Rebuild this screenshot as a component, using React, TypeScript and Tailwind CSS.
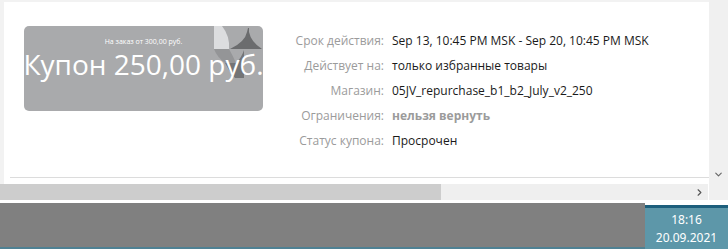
import { ChevronDown, ChevronRight } from "lucide-react";

const rows = [
  { label: "Срок действия:", value: "Sep 13, 10:45 PM MSK - Sep 20, 10:45 PM MSK" },
  { label: "Действует на:", value: "только избранные товары" },
  { label: "Магазин:", value: "05JV_repurchase_b1_b2_July_v2_250" },
  { label: "Ограничения:", value: "нельзя вернуть", muted: true },
  { label: "Статус купона:", value: "Просрочен" },
];

const CouponArt = () => (
  <svg className="absolute right-0 top-0" width="50" height="52" viewBox="0 0 50 52">
    <path d="M1 0 L9 0 Q17 10 16 23 L1 23 Z" fill="#dcdddf" />
    <path d="M1 23 L16 23 Q20 30 23 37 L12 37 Q4 31 1 23 Z" fill="#949597" />
    <path d="M12 37 L23 37 Q29 31 31 24 L31 52 L22 52 Q16 45 12 37 Z" fill="#737476" />
    <path d="M35 2 L36 2 L36 6 Q38 16 49 23 L17 23 Q32 16 34 6 Z" fill="#6b6c6e" />
  </svg>
);

export default function App() {
  return (
    <div className="w-[728px] h-[249px] overflow-hidden bg-white flex flex-col font-['Open_Sans','Noto_Sans',sans-serif]">
      <div className="h-[200px] flex">
        {/* main pane */}
        <div className="flex-1 flex flex-col">
          <div className="flex-1 border-l-4 border-t-2 border-[#f2f2f2] flex flex-col">
            <div className="flex pt-[24px] pl-[20px]">
              <div className="relative w-[239px] h-[85px] rounded-[5px] bg-[#a9aaac] overflow-hidden flex flex-col items-center text-white">
                <CouponArt />
                <div className="relative mt-[11px] text-[7px] leading-[10px]">На заказ от 300,00 руб.</div>
                <div className="relative text-[28px] leading-[34px] whitespace-nowrap">Купон 250,00 руб.</div>
              </div>
              <div className="mt-[2px] grid grid-cols-[121px_1fr] gap-x-[8px] text-[12px] leading-[25px]">
                {rows.map((r) => (
                  <div key={r.label} className="contents">
                    <div className="text-right text-[#9b9b9b]">{r.label}</div>
                    <div className={r.muted ? "font-bold text-[#9b9b9b]" : "text-[#1a1a1a]"}>{r.value}</div>
                  </div>
                ))}
              </div>
            </div>
            <div className="mt-auto mb-[6px] ml-[6px] h-px bg-[#dcdcdc]" />
          </div>
          {/* horizontal scrollbar */}
          <div className="h-[16px] bg-[#efefef] flex items-center mr-[1px]">
            <div className="w-[441px] h-full bg-[#cdcdcd]" />
            <div className="flex-1" />
            <ChevronRight size={11} strokeWidth={2.5} className="mr-[3px] text-[#555]" />
          </div>
        </div>
        {/* vertical scrollbar */}
        <div className="w-[19px] bg-[#f0f0f0] flex flex-col items-center justify-end pb-[20px]">
          <ChevronDown size={11} strokeWidth={2.5} className="text-[#666]" />
        </div>
      </div>
      <div className="h-[3px]" />
      {/* taskbar */}
      <div className="flex-1 flex">
        <div className="w-[645px] flex flex-col">
          <div className="flex-1 bg-[#808080]" />
          <div className="h-[2px] bg-[#4f8193]" />
        </div>
        <div className="flex-1 flex flex-col">
          <div className="h-[2px] bg-white" />
          <div className="h-[3px] bg-[#1d5f7c]" />
          <div className="flex-1 bg-[#5d97a9] flex flex-col items-center justify-center text-white text-[12px] leading-[18px] font-['Noto_Sans',sans-serif]">
            <div>18:16</div>
            <div>20.09.2021</div>
          </div>
        </div>
      </div>
    </div>
  );
}
